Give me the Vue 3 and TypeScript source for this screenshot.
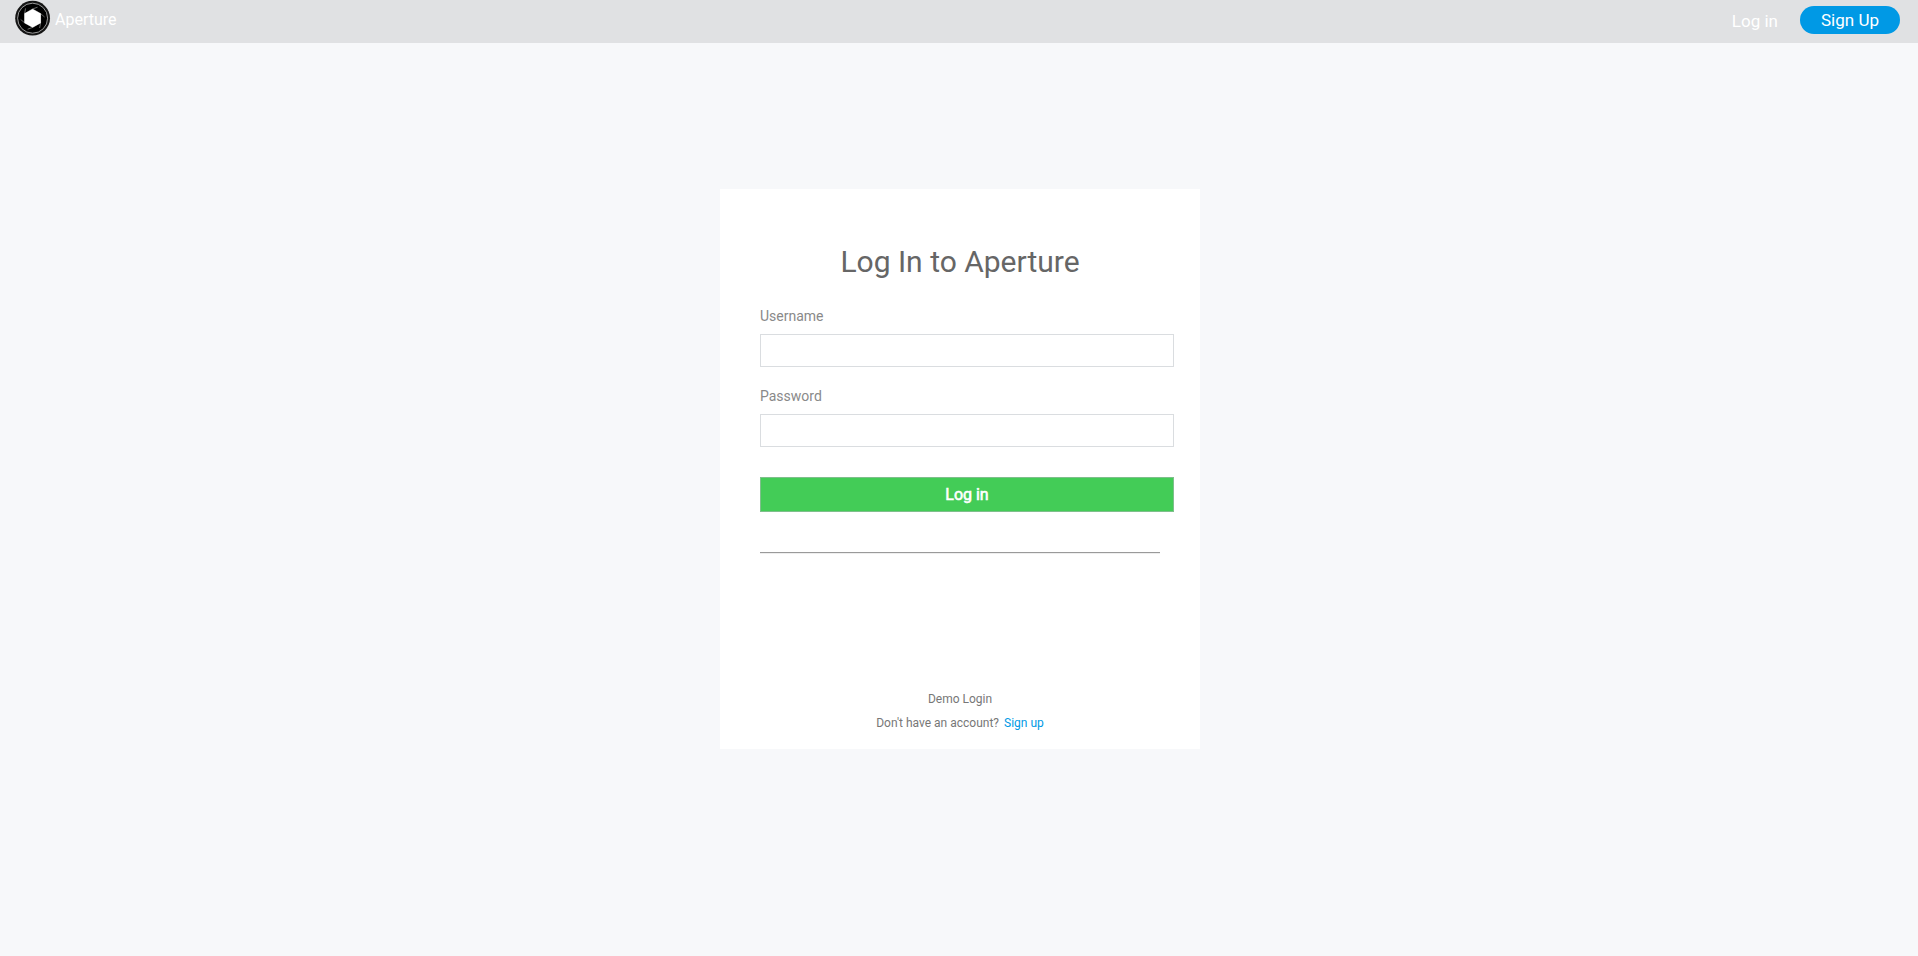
<script setup lang="ts">
import { ref } from 'vue'

const username = ref('')
const password = ref('')
const blades: number[] = [0, 60, 120, 180, 240, 300]
</script>

<template>
  <div class="page">
    <header class="nav">
      <a class="brand">
        <svg class="logo" viewBox="0 0 36 36" width="36" height="36" aria-hidden="true">
          <circle cx="17.6" cy="18.2" r="17.4" fill="#151515" />
          <circle cx="17.6" cy="18.2" r="15" fill="#000" stroke="#aaa" stroke-width="0.9" />
          <path
            v-for="angle in blades"
            :key="angle"
            d="M17.6 9 L25.6 13.6 L29.6 17"
            :transform="`rotate(${angle} 17.6 18.2)`"
            fill="none"
            stroke="#888"
            stroke-width="0.7"
          />
          <path d="M17.6 8.9 L25.8 13.5 V22.9 L17.6 27.5 L9.4 22.9 V13.5 Z" fill="#fff" />
        </svg>
        <span class="brand-name">Aperture</span>
      </a>
      <nav class="links">
        <a class="login-link">Log in</a>
        <a class="signup-link">Sign Up</a>
      </nav>
    </header>

    <main class="card">
      <h1>Log In to Aperture</h1>
      <form class="form" @submit.prevent>
        <label for="username">Username</label>
        <input id="username" v-model="username" type="text" />
        <label for="password">Password</label>
        <input id="password" v-model="password" type="password" />
        <button type="submit">Log in</button>
      </form>
      <hr />
      <footer class="foot">
        <a class="demo">Demo Login</a>
        <p>Don't have an account?<a class="signup">Sign up</a></p>
      </footer>
    </main>
  </div>
</template>

<style>
body {
  margin: 0;
  background: #f7f8fa;
}
</style>

<style scoped>
.page {
  min-height: 956px;
  background: #f7f8fa;
  font-family: Roboto, sans-serif;
}
.nav {
  display: flex;
  justify-content: space-between;
  box-sizing: border-box;
  height: 43px;
  padding: 0 18px 0 15px;
  background: #e0e1e3;
}
.brand {
  display: flex;
  color: #fff;
  font-size: 16px;
}
.logo {
  display: block;
  flex: none;
}
.brand-name {
  margin: 10px 0 0 4px;
  line-height: 19px;
}
.links {
  display: flex;
  color: #fff;
  font-size: 17px;
}
.login-link {
  margin: 12px 22px 0 0;
  line-height: 19px;
}
.signup-link {
  width: 100px;
  height: 28px;
  margin-top: 6px;
  border-radius: 14px;
  background: #0099e5;
  line-height: 28px;
  text-align: center;
}
.card {
  display: flex;
  flex-direction: column;
  box-sizing: border-box;
  width: 480px;
  height: 560px;
  margin: 146px 0 0 720px;
  padding: 0 40px;
  background: #fff;
}
h1 {
  margin: 54px 0 0;
  color: #666;
  font-size: 30px;
  font-weight: 400;
  line-height: 38px;
  text-align: center;
}
.form {
  display: flex;
  flex-direction: column;
  width: 414px;
  padding-top: 27px;
}
label {
  height: 17px;
  margin-bottom: 9px;
  color: #898989;
  font-size: 14px;
  line-height: 17px;
}
input {
  box-sizing: border-box;
  width: 100%;
  height: 33px;
  margin: 0 0 21px;
  padding: 0 10px;
  border: 1px solid #dadde0;
  border-radius: 0;
  outline: none;
  background: #fff;
  font: 14px Roboto, sans-serif;
}
button {
  box-sizing: border-box;
  height: 35px;
  margin-top: 9px;
  padding: 0;
  border: 1px solid #7fbf8c;
  border-radius: 0;
  background: #43cc57;
  color: #fff;
  font: 400 16px/33px Roboto, sans-serif;
  -webkit-text-stroke: 0.6px #fff;
}
hr {
  width: 400px;
  height: 0;
  margin: 40px 0 0;
  border: 0;
  border-top: 1px solid #9a9a9a;
  border-bottom: 1px solid #eee;
}
.foot {
  display: flex;
  flex-direction: column;
  align-items: center;
  gap: 10px;
  margin-top: auto;
  padding-bottom: 19px;
  color: #777;
  font-size: 12px;
  line-height: 14px;
}
.foot p {
  margin: 0;
}
.signup {
  margin-left: 5px;
  color: #0099e5;
}
</style>
